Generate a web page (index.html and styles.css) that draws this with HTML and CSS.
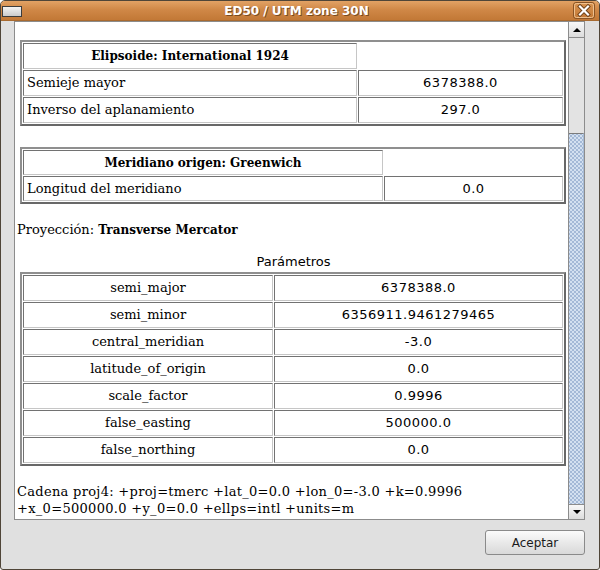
FILE: index.html
```html
<!DOCTYPE html>
<html lang="es">
<head>
<meta charset="utf-8">
<title>ED50 / UTM zone 30N</title>
<link rel="stylesheet" href="styles.css">
</head>
<body>
<div class="window">
  <div class="titlebar">
    <svg class="win-icon" width="20" height="11" viewBox="0 0 20 11">
      <defs>
        <linearGradient id="ig" x1="0" y1="0" x2="0" y2="1">
          <stop offset="0" stop-color="#f6f6f6"/>
          <stop offset="1" stop-color="#c9c9c9"/>
        </linearGradient>
      </defs>
      <rect x="0.5" y="0.5" width="19" height="10" fill="url(#ig)" stroke="#3c3c3c"/>
    </svg>
    <div class="title">ED50 / UTM zone 30N</div>
    <svg class="close" width="22" height="17" viewBox="0 0 22 17">
      <defs>
        <linearGradient id="cg" x1="0" y1="0" x2="0" y2="1">
          <stop offset="0" stop-color="#d99552"/>
          <stop offset="1" stop-color="#c27734"/>
        </linearGradient>
      </defs>
      <rect x="0.5" y="0.5" width="21" height="16" rx="2.5" fill="url(#cg)" stroke="#8a5424"/>
      <rect x="1.5" y="1.5" width="19" height="14" rx="2" fill="none" stroke="#efc08e"/>
      <path d="M7 4.5 L15 12.5 M15 4.5 L7 12.5" stroke="#6b3f18" stroke-width="4" stroke-linecap="square"/>
      <path d="M7 4.5 L15 12.5 M15 4.5 L7 12.5" stroke="#ffffff" stroke-width="2.2" stroke-linecap="square"/>
    </svg>
  </div>
  <div class="body">
    <div class="scrollpane">
      <div class="viewport">
        <table class="grid t1">
          <tr><td class="head w1">Elipsoide: International 1924</td><td class="empty"></td></tr>
          <tr><td class="name">Semieje mayor</td><td class="num">6378388.0</td></tr>
          <tr><td class="name">Inverso del aplanamiento</td><td class="num">297.0</td></tr>
        </table>
        <table class="grid t2">
          <tr><td class="head w2">Meridiano origen: Greenwich</td><td class="empty"></td></tr>
          <tr><td class="name">Longitud del meridiano</td><td class="num">0.0</td></tr>
        </table>
        <p class="proj">Proyección: <b>Transverse Mercator</b></p>
        <div class="caption">Parámetros</div>
        <table class="grid t3">
          <tr><td class="pname w3">semi_major</td><td class="num">6378388.0</td></tr>
          <tr><td class="pname">semi_minor</td><td class="num">6356911.9461279465</td></tr>
          <tr><td class="pname">central_meridian</td><td class="num">-3.0</td></tr>
          <tr><td class="pname">latitude_of_origin</td><td class="num">0.0</td></tr>
          <tr><td class="pname">scale_factor</td><td class="num">0.9996</td></tr>
          <tr><td class="pname">false_easting</td><td class="num">500000.0</td></tr>
          <tr><td class="pname">false_northing</td><td class="num">0.0</td></tr>
        </table>
        <p class="proj4">Cadena proj4: +proj=tmerc +lat_0=0.0 +lon_0=-3.0 +k=0.9996<br>+x_0=500000.0 +y_0=0.0 +ellps=intl +units=m</p>
      </div>
      <div class="vscroll">
        <div class="arrow up"><span class="tri-up"></span></div>
        <div class="track">
          <div class="thumb"></div>
        </div>
        <div class="arrow down"><span class="tri-down"></span></div>
      </div>
    </div>
    <div class="buttons">
      <button class="btn">Aceptar</button>
    </div>
  </div>
</div>
</body>
</html>
```
FILE: styles.css
```css
* { box-sizing: border-box; }
html, body { margin: 0; padding: 0; background: #ffffff; }
body { width: 600px; height: 570px; overflow: hidden; }

.window {
  width: 600px;
  height: 570px;
  border: 1px solid #4f4538;
  border-radius: 5px 5px 3px 3px;
  background: #e0e0e0;
  display: flex;
  flex-direction: column;
  overflow: hidden;
}

.titlebar {
  height: 20px;
  flex: none;
  display: flex;
  align-items: center;
  padding: 0 4px 0 1px;
  background: linear-gradient(#e2a265, #d08847 45%, #c27836 100%);
  border-bottom: 1px solid #a86a30;
}
.win-icon { display: block; flex: none; margin-top: 1px; }
.title {
  flex: 1;
  text-align: center;
  font-family: "DejaVu Sans", sans-serif;
  font-weight: bold;
  font-size: 12px;
  color: #ffffff;
  text-shadow: 1px 1px 0 #7a4a20;
  padding-right: 2px;
}
.close { display: block; flex: none; }

.body {
  flex: 1;
  display: flex;
  flex-direction: column;
  padding: 0 14px 14px 13px;
}

.scrollpane {
  height: 499px;
  flex: none;
  display: flex;
  border: 1px solid #8c8c8c;
  background: #ffffff;
}

.viewport {
  flex: 1;
  overflow: hidden;
  padding: 0 2px 0 2px;
  font-family: "DejaVu Serif", serif;
  font-size: 13px;
  color: #000000;
}

.grid {
  width: 546px;
  margin-left: 3px;
  table-layout: fixed;
  border-collapse: separate;
  border-spacing: 1px;
  border: 2px solid;
  border-color: #8f8f8f #686868 #686868 #8f8f8f;
}
.grid td {
  height: 26px;
  padding: 0 3px;
  border: 1px solid;
  border-color: #727272 #c6c6c6 #c6c6c6 #727272;
  vertical-align: middle;
  white-space: nowrap;
  line-height: 16px;
}
.grid td.empty { border-color: transparent; }
.t1 { margin-top: 18px; }
.t2 { margin-top: 21px; }
.t2 td { height: 25px; }
.t3 { margin-top: 2px; }

.w1 { width: 334px; }
.w2 { width: 360px; }
.w3 { width: 250px; }

.head { text-align: center; font-weight: bold; font-size: 12px; }
.name { text-align: left; }
.pname { text-align: center; }
.num {
  text-align: center;
  font-family: "DejaVu Sans", sans-serif;
  font-size: 13px;
  letter-spacing: 0.5px;
  color: #000000;
}

.proj {
  margin: 18px 0 0 0;
  line-height: 16px;
}
.proj b { font-size: 12px; }

.caption {
  margin-top: 16px;
  line-height: 16px;
  text-align: center;
  font-family: "DejaVu Sans", sans-serif;
  font-size: 13px;
  padding-left: 4px;
  color: #000000;
}

.proj4 {
  margin: 17px 0 0 0;
  line-height: 17px;
  letter-spacing: 0.3px;
}

.vscroll {
  width: 16px;
  flex: none;
  display: flex;
  flex-direction: column;
  border-left: 1px solid #8c8c8c;
  background: #e3e3e3;
}
.arrow {
  height: 16px;
  flex: none;
  display: flex;
  align-items: center;
  justify-content: center;
  background: linear-gradient(#f8f8f8, #dcdcdc);
}
.arrow.up { border-bottom: 1px solid #8c8c8c; }
.arrow.down { border-top: 1px solid #8c8c8c; height: 15px; }
.tri-up {
  width: 0; height: 0;
  border-left: 4px solid transparent;
  border-right: 4px solid transparent;
  border-bottom: 4px solid #000;
}
.tri-down {
  width: 0; height: 0;
  border-left: 4px solid transparent;
  border-right: 4px solid transparent;
  border-top: 4px solid #000;
}
.track {
  flex: 1;
  display: flex;
  flex-direction: column;
  justify-content: flex-end;
}
.thumb {
  height: 371px;
  border-top: 1px solid #7c7c7c;
  border-right: 1px solid #a8bcd6;
  background:
    radial-gradient(circle, #8aa3c8 0.6px, transparent 0.9px) 0 0 / 4px 4px,
    radial-gradient(circle, #8aa3c8 0.6px, transparent 0.9px) 2px 2px / 4px 4px,
    #d3e0f0;
}

.buttons {
  display: flex;
  justify-content: flex-end;
  margin-top: 10px;
}
.btn {
  width: 100px;
  height: 25px;
  border: 1px solid #8a8a8a;
  border-radius: 3px;
  background: linear-gradient(#fbfbfb, #e9e9e9 50%, #d9d9d9);
  font-family: "DejaVu Sans", sans-serif;
  font-size: 12px;
  color: #1a1a1a;
  padding: 0;
}
```
